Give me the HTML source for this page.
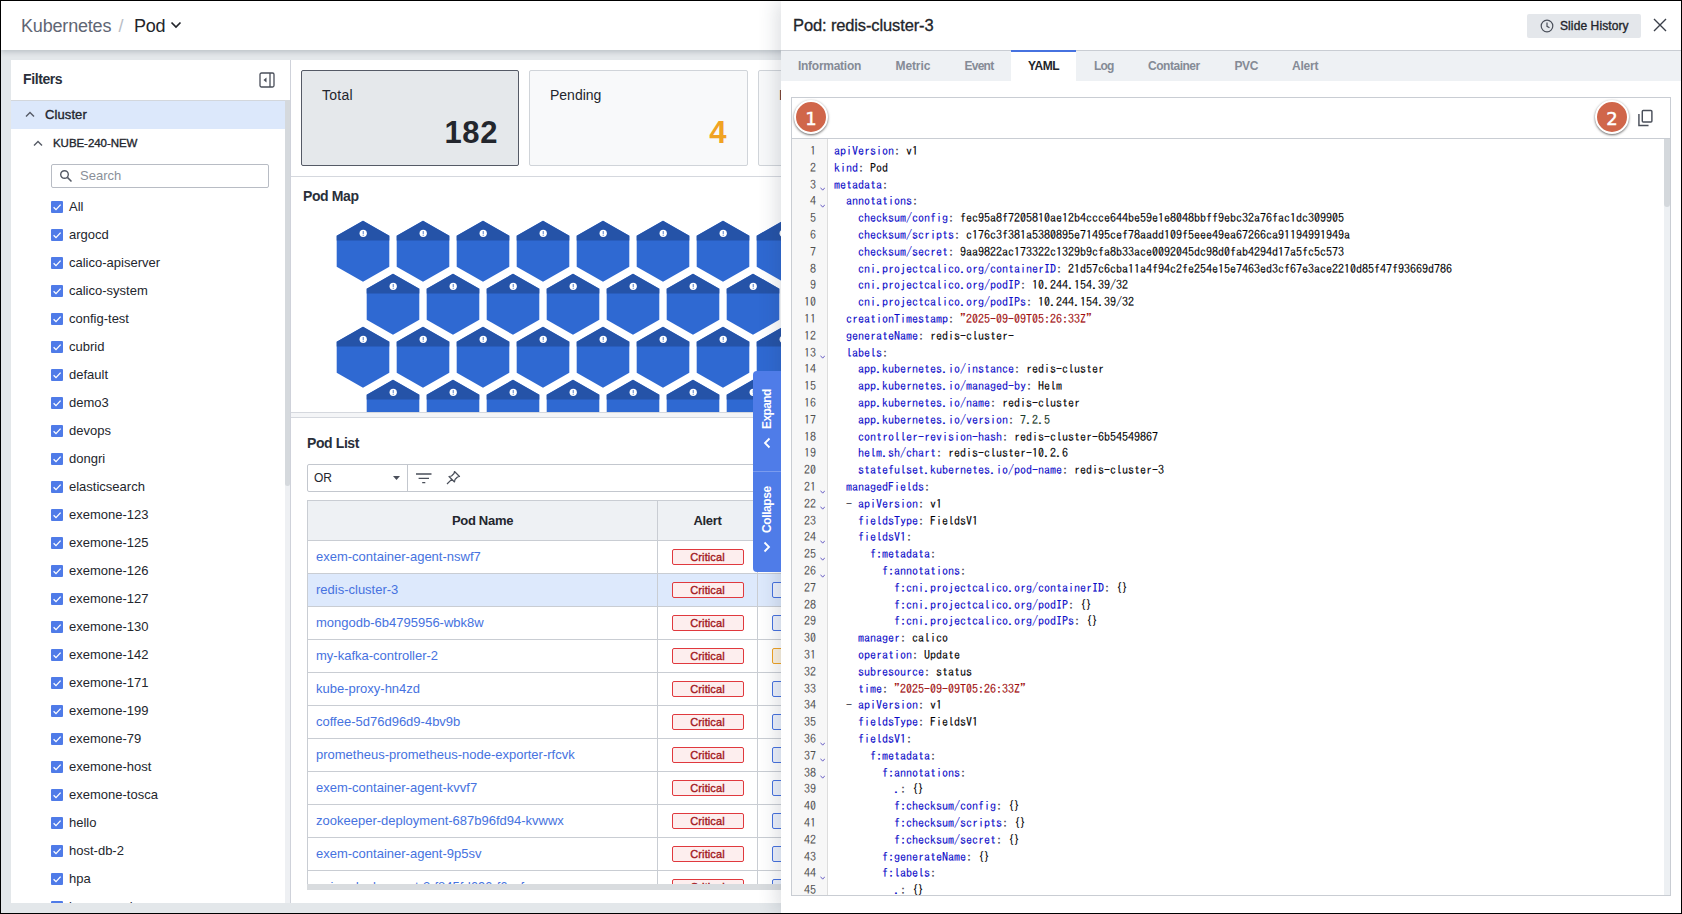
<!DOCTYPE html>
<html lang="en"><head><meta charset="utf-8"><title>Kubernetes / Pod</title>
<style>
*{box-sizing:border-box;margin:0;padding:0}
html,body{width:1682px;height:914px;overflow:hidden}
body{position:relative;background:#e3e7ea;font-family:"Liberation Sans", "DejaVu Sans", sans-serif;font-size:13px;color:#23262d;-webkit-font-smoothing:antialiased}
.abs{position:absolute}
#frame{position:absolute;left:0;top:0;width:1682px;height:914px;border:1px solid #000;z-index:100;pointer-events:none}
#top{position:absolute;left:1px;top:1px;width:1680px;height:49px;background:#fff;box-shadow:0 2px 5px rgba(60,70,85,.24)}
#top .k{position:absolute;left:20px;top:14px;font-size:18px;line-height:22px;color:#5f6674;white-space:nowrap;letter-spacing:-.18px}
#top .sl{position:absolute;left:117.5px;top:14px;font-size:18px;line-height:22px;color:#b9bdc6}
#top .p{position:absolute;left:133px;top:14px;font-size:18px;line-height:22px;color:#22252b;letter-spacing:-.25px}
#side{position:absolute;left:11px;top:60px;width:279px;height:843px;background:#fff;overflow:hidden}
#side .ttl{position:absolute;left:12px;top:10px;font-size:14px;font-weight:700;line-height:18px;color:#2a2f3a;letter-spacing:-.4px}
#side .cl{position:absolute;left:0;top:40px;width:274px;height:29px;background:#dce8fb;border-top:1px solid #d3d7dc}
#side .cl span{position:absolute;left:34px;top:6px;font-size:13px;line-height:16px;font-weight:400;-webkit-text-stroke:.35px #23262d;color:#23262d;letter-spacing:.1px}
#side .kube{position:absolute;left:42px;top:76px;font-size:11.5px;line-height:14px;color:#23262d;font-weight:400;-webkit-text-stroke:.35px #23262d;letter-spacing:-.05px}
#side .search{position:absolute;left:40px;top:104px;width:218px;height:24px;border:1px solid #b8bcc4;border-radius:2px;background:#fff}
#side .search span{position:absolute;left:28px;top:3px;font-size:13px;line-height:16px;color:#8a8f99}
.ck{position:absolute;left:40px;width:12px;height:12px;background:#4f7be8;border-radius:1px}
.ck svg{position:absolute;left:0;top:0}
.lb{position:absolute;left:58px;font-size:13px;line-height:16px;color:#23262d;white-space:nowrap}
#side .trk{position:absolute;left:274px;top:40px;width:5px;height:803px;background:#eef0f3}
#side .thb{position:absolute;left:274px;top:40px;width:5px;height:386px;background:#d5d9dd;border-radius:0 0 3px 3px}
#main{position:absolute;left:291px;top:60px;width:1000px;height:843px;background:#fff;overflow:hidden}
.card{position:absolute;top:10px;width:218px;height:96px;border-radius:2px}
.card .t{position:absolute;left:20px;top:15px;font-size:14px;line-height:18px;color:#23262d;letter-spacing:.25px}
.card .v{position:absolute;right:20px;top:41.5px;font-size:31px;line-height:40px;font-weight:700;letter-spacing:.6px}
.hline{position:absolute;left:0;width:1000px;height:1px;background:#d5d8de}
.sec{position:absolute;font-size:14px;font-weight:700;line-height:18px;color:#2a2f3a;letter-spacing:-.4px}
#tb{position:absolute;left:16px;top:404px;width:800px;height:28px;border:1px solid #c3c7ce;border-radius:2px}
#tb .or{position:absolute;left:0;top:0;width:100px;height:26px;border-right:1px solid #c3c7ce}
#tb .or span{position:absolute;left:6px;top:5px;font-size:12px;line-height:16px;color:#23262d}
table{position:absolute;left:16px;top:440px;border-collapse:collapse;table-layout:fixed;width:900px}
th{height:40px;background:#eef1f4;border:1px solid #c9cdd3;font-size:13px;font-weight:700;color:#23262d;text-align:center;letter-spacing:-.3px}
td{height:33px;border:1px solid #c9cdd3;font-size:13px;color:#4672e0;padding:0 0 2px 8px;white-space:nowrap;overflow:hidden}
tr.sel td{background:#dde9fc}
.crit{display:block;margin:0 auto;width:72px;height:16px;border:1px solid #e0393e;border-radius:2px;background:#fdeeee;color:#a3181d;font-size:11px;font-weight:400;-webkit-text-stroke:.35px #a3181d;line-height:14px;text-align:center;letter-spacing:.1px}
.bx{display:block;margin:0 0 0 14px;width:40px;height:16px;border:1px solid #4672e0;border-radius:2px;background:#edf2fd}
.bx.o{border-color:#f0a323;background:#fdf3e0}
#exp{position:absolute;left:753px;top:371px;width:28px;height:201px;background:#4f7ce8;border-radius:4px 0 0 4px;z-index:11}
#exp .d{position:absolute;left:0;top:100px;width:28px;height:1px;background:#7a9bee}
#exp .tx{position:absolute;left:14px;color:#fff;font-size:12px;font-weight:700;line-height:14px;white-space:nowrap;transform-origin:0 0;transform:rotate(-90deg) translate(0,-7px)}
#panel{position:absolute;left:781px;top:1px;width:900px;height:912px;background:#fff;box-shadow:-4px 0 18px rgba(40,50,70,.16);z-index:10}
#panel .title{position:absolute;left:12px;top:14px;font-size:16.5px;line-height:20px;color:#22252b;-webkit-text-stroke:.3px #22252b;white-space:nowrap;letter-spacing:-.13px}
#panel .sh{position:absolute;left:746px;top:13px;width:114px;height:24px;background:#e4e7eb;border-radius:2px}
#panel .sh span{position:absolute;left:33px;top:5px;font-size:12px;line-height:14px;color:#22252b;font-weight:400;-webkit-text-stroke:.35px #22252b;white-space:nowrap;letter-spacing:.1px}
#tabs{position:absolute;left:0;top:49px;width:900px;height:31px;background:#eef1f4;border-top:1px solid #c9cdd3}
#tabs span{position:absolute;top:8px;font-size:12px;line-height:14px;font-weight:700;color:#858b96;white-space:nowrap}
#tabs .act{position:absolute;left:230px;top:-1px;width:65px;height:31px;background:#fff;border-top:2px solid #4672e0}
#ed{position:absolute;left:10px;top:96px;width:880px;height:799px;border:1px solid #c9cdd3;overflow:hidden;background:#fff}
#ed .bar{position:absolute;left:0;top:0;width:878px;height:41px;border-bottom:1px solid #c9cdd3;background:#fff}
#ed .gut{position:absolute;left:0;top:41px;width:36px;height:760px;background:#f7f7f7;border-right:1px solid #ddd}
#ed .ln{position:absolute;left:0;width:24px;text-align:right;font:12px/17px "IPAGothic", "WenQuanYi Zen Hei Mono", "Liberation Mono", monospace;color:#4f4f4f}
#ed .fd{position:absolute;left:27.6px;width:5.4px;height:4px}
#ed .cd{position:absolute;left:42px;font:12px/17px "IPAGothic", "WenQuanYi Zen Hei Mono", "Liberation Mono", monospace;color:#000;white-space:pre;-webkit-text-stroke:.12px}
#ed .k{color:#0a0ac8}
#ed .s{color:#a00d0d}
#ed .n{color:#1a3a2a}
#ed .m{color:#4a4a55}
#ed .strk{position:absolute;left:872px;top:41px;width:6px;height:760px;background:#edf0f3}
#ed .sthb{position:absolute;left:872px;top:41px;width:6px;height:68px;background:#d4d8dc;border-radius:0 0 3px 3px}
.badge{position:absolute;width:34px;height:34px;border-radius:50%;background:#d0664a;border:2px solid #fff;box-shadow:0 1px 2.5px rgba(0,0,0,.6);color:#fff;font-family:"DejaVu Sans","Liberation Sans",sans-serif;font-size:18px;line-height:33px;text-align:center;-webkit-text-stroke:.45px #fff}
</style></head><body>

<div id="top"><span class="k">Kubernetes</span><span class="sl">/</span><span class="p">Pod</span>
<svg class="abs" style="left:169px;top:20px" width="12" height="8" viewBox="0 0 12 8"><path d="M1.5 1.5 L6 6 L10.5 1.5" fill="none" stroke="#22252b" stroke-width="1.7"/></svg></div>
<div id="side"><div class="ttl">Filters</div>
<svg class="abs" style="left:248px;top:12px" width="16" height="16" viewBox="0 0 16 16"><rect x="1" y="1" width="14" height="14" rx="1.5" fill="none" stroke="#4a4f5a" stroke-width="1.3"/><path d="M11 1 V15" stroke="#4a4f5a" stroke-width="1.3"/><path d="M7.5 5.5 L4.5 8 L7.5 10.5 Z" fill="#4a4f5a"/></svg>
<div class="cl"><svg class="abs" style="left:14px;top:10px" width="10" height="7" viewBox="0 0 10 7"><path d="M1 5.5 L5 1.5 L9 5.5" fill="none" stroke="#555a65" stroke-width="1.4"/></svg><span>Cluster</span></div>
<svg class="abs" style="left:22px;top:80px" width="10" height="7" viewBox="0 0 10 7"><path d="M1 5.5 L5 1.5 L9 5.5" fill="none" stroke="#555a65" stroke-width="1.4"/></svg>
<div class="kube">KUBE-240-NEW</div>
<div class="search"><svg class="abs" style="left:7px;top:4px" width="14" height="14" viewBox="0 0 14 14"><circle cx="5.5" cy="5.5" r="3.8" fill="none" stroke="#555a65" stroke-width="1.4"/><path d="M8.4 8.4 L12.5 12.5" stroke="#555a65" stroke-width="1.5"/></svg><span>Search</span></div>
<div class="ck" style="top:141px"><svg width="12" height="12" viewBox="0 0 12 12"><path d="M2.6 6.2 L5 8.6 L9.6 3.6" fill="none" stroke="#fff" stroke-width="1.3"/></svg></div><div class="lb" style="top:139px">All</div>
<div class="ck" style="top:169px"><svg width="12" height="12" viewBox="0 0 12 12"><path d="M2.6 6.2 L5 8.6 L9.6 3.6" fill="none" stroke="#fff" stroke-width="1.3"/></svg></div><div class="lb" style="top:167px">argocd</div>
<div class="ck" style="top:197px"><svg width="12" height="12" viewBox="0 0 12 12"><path d="M2.6 6.2 L5 8.6 L9.6 3.6" fill="none" stroke="#fff" stroke-width="1.3"/></svg></div><div class="lb" style="top:195px">calico-apiserver</div>
<div class="ck" style="top:225px"><svg width="12" height="12" viewBox="0 0 12 12"><path d="M2.6 6.2 L5 8.6 L9.6 3.6" fill="none" stroke="#fff" stroke-width="1.3"/></svg></div><div class="lb" style="top:223px">calico-system</div>
<div class="ck" style="top:253px"><svg width="12" height="12" viewBox="0 0 12 12"><path d="M2.6 6.2 L5 8.6 L9.6 3.6" fill="none" stroke="#fff" stroke-width="1.3"/></svg></div><div class="lb" style="top:251px">config-test</div>
<div class="ck" style="top:281px"><svg width="12" height="12" viewBox="0 0 12 12"><path d="M2.6 6.2 L5 8.6 L9.6 3.6" fill="none" stroke="#fff" stroke-width="1.3"/></svg></div><div class="lb" style="top:279px">cubrid</div>
<div class="ck" style="top:309px"><svg width="12" height="12" viewBox="0 0 12 12"><path d="M2.6 6.2 L5 8.6 L9.6 3.6" fill="none" stroke="#fff" stroke-width="1.3"/></svg></div><div class="lb" style="top:307px">default</div>
<div class="ck" style="top:337px"><svg width="12" height="12" viewBox="0 0 12 12"><path d="M2.6 6.2 L5 8.6 L9.6 3.6" fill="none" stroke="#fff" stroke-width="1.3"/></svg></div><div class="lb" style="top:335px">demo3</div>
<div class="ck" style="top:365px"><svg width="12" height="12" viewBox="0 0 12 12"><path d="M2.6 6.2 L5 8.6 L9.6 3.6" fill="none" stroke="#fff" stroke-width="1.3"/></svg></div><div class="lb" style="top:363px">devops</div>
<div class="ck" style="top:393px"><svg width="12" height="12" viewBox="0 0 12 12"><path d="M2.6 6.2 L5 8.6 L9.6 3.6" fill="none" stroke="#fff" stroke-width="1.3"/></svg></div><div class="lb" style="top:391px">dongri</div>
<div class="ck" style="top:421px"><svg width="12" height="12" viewBox="0 0 12 12"><path d="M2.6 6.2 L5 8.6 L9.6 3.6" fill="none" stroke="#fff" stroke-width="1.3"/></svg></div><div class="lb" style="top:419px">elasticsearch</div>
<div class="ck" style="top:449px"><svg width="12" height="12" viewBox="0 0 12 12"><path d="M2.6 6.2 L5 8.6 L9.6 3.6" fill="none" stroke="#fff" stroke-width="1.3"/></svg></div><div class="lb" style="top:447px">exemone-123</div>
<div class="ck" style="top:477px"><svg width="12" height="12" viewBox="0 0 12 12"><path d="M2.6 6.2 L5 8.6 L9.6 3.6" fill="none" stroke="#fff" stroke-width="1.3"/></svg></div><div class="lb" style="top:475px">exemone-125</div>
<div class="ck" style="top:505px"><svg width="12" height="12" viewBox="0 0 12 12"><path d="M2.6 6.2 L5 8.6 L9.6 3.6" fill="none" stroke="#fff" stroke-width="1.3"/></svg></div><div class="lb" style="top:503px">exemone-126</div>
<div class="ck" style="top:533px"><svg width="12" height="12" viewBox="0 0 12 12"><path d="M2.6 6.2 L5 8.6 L9.6 3.6" fill="none" stroke="#fff" stroke-width="1.3"/></svg></div><div class="lb" style="top:531px">exemone-127</div>
<div class="ck" style="top:561px"><svg width="12" height="12" viewBox="0 0 12 12"><path d="M2.6 6.2 L5 8.6 L9.6 3.6" fill="none" stroke="#fff" stroke-width="1.3"/></svg></div><div class="lb" style="top:559px">exemone-130</div>
<div class="ck" style="top:589px"><svg width="12" height="12" viewBox="0 0 12 12"><path d="M2.6 6.2 L5 8.6 L9.6 3.6" fill="none" stroke="#fff" stroke-width="1.3"/></svg></div><div class="lb" style="top:587px">exemone-142</div>
<div class="ck" style="top:617px"><svg width="12" height="12" viewBox="0 0 12 12"><path d="M2.6 6.2 L5 8.6 L9.6 3.6" fill="none" stroke="#fff" stroke-width="1.3"/></svg></div><div class="lb" style="top:615px">exemone-171</div>
<div class="ck" style="top:645px"><svg width="12" height="12" viewBox="0 0 12 12"><path d="M2.6 6.2 L5 8.6 L9.6 3.6" fill="none" stroke="#fff" stroke-width="1.3"/></svg></div><div class="lb" style="top:643px">exemone-199</div>
<div class="ck" style="top:673px"><svg width="12" height="12" viewBox="0 0 12 12"><path d="M2.6 6.2 L5 8.6 L9.6 3.6" fill="none" stroke="#fff" stroke-width="1.3"/></svg></div><div class="lb" style="top:671px">exemone-79</div>
<div class="ck" style="top:701px"><svg width="12" height="12" viewBox="0 0 12 12"><path d="M2.6 6.2 L5 8.6 L9.6 3.6" fill="none" stroke="#fff" stroke-width="1.3"/></svg></div><div class="lb" style="top:699px">exemone-host</div>
<div class="ck" style="top:729px"><svg width="12" height="12" viewBox="0 0 12 12"><path d="M2.6 6.2 L5 8.6 L9.6 3.6" fill="none" stroke="#fff" stroke-width="1.3"/></svg></div><div class="lb" style="top:727px">exemone-tosca</div>
<div class="ck" style="top:757px"><svg width="12" height="12" viewBox="0 0 12 12"><path d="M2.6 6.2 L5 8.6 L9.6 3.6" fill="none" stroke="#fff" stroke-width="1.3"/></svg></div><div class="lb" style="top:755px">hello</div>
<div class="ck" style="top:785px"><svg width="12" height="12" viewBox="0 0 12 12"><path d="M2.6 6.2 L5 8.6 L9.6 3.6" fill="none" stroke="#fff" stroke-width="1.3"/></svg></div><div class="lb" style="top:783px">host-db-2</div>
<div class="ck" style="top:813px"><svg width="12" height="12" viewBox="0 0 12 12"><path d="M2.6 6.2 L5 8.6 L9.6 3.6" fill="none" stroke="#fff" stroke-width="1.3"/></svg></div><div class="lb" style="top:811px">hpa</div>
<div class="ck" style="top:841px"><svg width="12" height="12" viewBox="0 0 12 12"><path d="M2.6 6.2 L5 8.6 L9.6 3.6" fill="none" stroke="#fff" stroke-width="1.3"/></svg></div><div class="lb" style="top:839px">ingress-nginx</div>
<div class="trk"></div><div class="thb"></div></div>
<div class="abs" style="left:290px;top:60px;width:1px;height:843px;background:#cfd2da"></div>
<div id="main">
<div class="card" style="left:10px;background:#e5e8eb;border:1px solid #555a66"><div class="t">Total</div><div class="v" style="color:#23262d">182</div></div>
<div class="card" style="left:238px;width:219px;background:#f8f9fa;border:1px solid #d0d4d9"><div class="t" style="letter-spacing:0">Pending</div><div class="v" style="color:#f0a323">4</div></div>
<div class="card" style="left:467px;background:#f8f9fa;border:1px solid #d0d4d9"><div class="t">Running</div></div>
<div class="hline" style="top:116px"></div>
<div class="sec" style="left:12px;top:127px">Pod Map</div>
<svg class="abs" style="left:0;top:150px" width="1000" height="202" viewBox="291 210 1000 202">
<defs><g id="hx"><path d="M0 -30.3 L26.3 -15.3 V15.7 L0 30.8 L-26.3 15.7 V-15.3 Z" fill="#2f69d2"/><path d="M0 -30.3 L26.3 -15.3 V-10.5 H-26.3 V-15.3 Z" fill="#2553a8"/><circle cx="0.2" cy="-17.7" r="3.65" fill="#fff"/><rect x="-.25" y="-20" width=".9" height="3.2" fill="#3f6fc4"/><rect x="-.25" y="-16.1" width=".9" height=".9" fill="#3f6fc4"/></g></defs>
<use href="#hx" x="363" y="251"/>
<use href="#hx" x="423" y="251"/>
<use href="#hx" x="483" y="251"/>
<use href="#hx" x="543" y="251"/>
<use href="#hx" x="603" y="251"/>
<use href="#hx" x="663" y="251"/>
<use href="#hx" x="723" y="251"/>
<use href="#hx" x="783" y="251"/>
<use href="#hx" x="843" y="251"/>
<use href="#hx" x="393" y="304"/>
<use href="#hx" x="453" y="304"/>
<use href="#hx" x="513" y="304"/>
<use href="#hx" x="573" y="304"/>
<use href="#hx" x="633" y="304"/>
<use href="#hx" x="693" y="304"/>
<use href="#hx" x="753" y="304"/>
<use href="#hx" x="813" y="304"/>
<use href="#hx" x="873" y="304"/>
<use href="#hx" x="363" y="357"/>
<use href="#hx" x="423" y="357"/>
<use href="#hx" x="483" y="357"/>
<use href="#hx" x="543" y="357"/>
<use href="#hx" x="603" y="357"/>
<use href="#hx" x="663" y="357"/>
<use href="#hx" x="723" y="357"/>
<use href="#hx" x="783" y="357"/>
<use href="#hx" x="843" y="357"/>
<use href="#hx" x="393" y="410"/>
<use href="#hx" x="453" y="410"/>
<use href="#hx" x="513" y="410"/>
<use href="#hx" x="573" y="410"/>
<use href="#hx" x="633" y="410"/>
<use href="#hx" x="693" y="410"/>
<use href="#hx" x="753" y="410"/>
<use href="#hx" x="813" y="410"/>
<use href="#hx" x="873" y="410"/>
</svg>
<div class="hline" style="top:352px"></div><div class="abs" style="left:0;top:353px;width:1000px;height:4px;background:#f4f5f7"></div><div class="hline" style="top:357px"></div>
<div class="sec" style="left:16px;top:374px">Pod List</div>
<div id="tb"><div class="or"><span>OR</span><svg class="abs" style="left:85px;top:11px" width="7" height="4" viewBox="0 0 7 4"><path d="M0 0 H7 L3.5 4 Z" fill="#4a4f5a"/></svg></div>
<svg class="abs" style="left:107.5px;top:6.5px" width="16" height="14" viewBox="0 0 16 14"><path d="M0 2 H15.5 M2.6 6.3 H13 M6.2 10.6 H9.3" stroke="#4a4f5a" stroke-width="1.3"/></svg>
<svg class="abs" style="left:138px;top:5px" width="15" height="16" viewBox="0 0 15 16"><path d="M8.5 1.5 L13.5 6.5 L11.5 7 L9 9.5 L8.5 12 L3 6.5 L5.5 6 L8 3.5 Z M5.7 9.3 L1 14" fill="none" stroke="#4a4f5a" stroke-width="1.2" stroke-linejoin="round"/></svg></div>
<table><colgroup><col style="width:350px"><col style="width:100px"><col style="width:450px"></colgroup>
<tr><th>Pod Name</th><th>Alert</th><th></th></tr>
<tr><td>exem-container-agent-nswf7</td><td style="padding:0"><span class="crit">Critical</span></td><td style="padding:0"><span class="bx"></span></td></tr>
<tr class="sel"><td>redis-cluster-3</td><td style="padding:0"><span class="crit">Critical</span></td><td style="padding:0"><span class="bx"></span></td></tr>
<tr><td>mongodb-6b4795956-wbk8w</td><td style="padding:0"><span class="crit">Critical</span></td><td style="padding:0"><span class="bx"></span></td></tr>
<tr><td>my-kafka-controller-2</td><td style="padding:0"><span class="crit">Critical</span></td><td style="padding:0"><span class="bx o"></span></td></tr>
<tr><td>kube-proxy-hn4zd</td><td style="padding:0"><span class="crit">Critical</span></td><td style="padding:0"><span class="bx"></span></td></tr>
<tr><td>coffee-5d76d96d9-4bv9b</td><td style="padding:0"><span class="crit">Critical</span></td><td style="padding:0"><span class="bx"></span></td></tr>
<tr><td>prometheus-prometheus-node-exporter-rfcvk</td><td style="padding:0"><span class="crit">Critical</span></td><td style="padding:0"><span class="bx"></span></td></tr>
<tr><td>exem-container-agent-kvvf7</td><td style="padding:0"><span class="crit">Critical</span></td><td style="padding:0"><span class="bx"></span></td></tr>
<tr><td>zookeeper-deployment-687b96fd94-kvwwx</td><td style="padding:0"><span class="crit">Critical</span></td><td style="padding:0"><span class="bx"></span></td></tr>
<tr><td>exem-container-agent-9p5sv</td><td style="padding:0"><span class="crit">Critical</span></td><td style="padding:0"><span class="bx"></span></td></tr>
<tr><td>nginx-deployment-2-f845fd696-f6zsf</td><td style="padding:0"><span class="crit">Critical</span></td><td style="padding:0"><span class="bx"></span></td></tr>
</table>
<div class="abs" style="left:16px;top:824px;width:984px;height:6px;background:#d9dcdf"></div><div class="abs" style="left:0;top:830px;width:1000px;height:13px;background:#fff"></div>
</div>
<div id="exp"><div class="d"></div><div class="tx" style="top:58px;letter-spacing:-.6px">Expand</div><svg class="abs" style="left:10px;top:66px" width="8" height="12" viewBox="0 0 8 12"><path d="M6.5 1.5 L2 6 L6.5 10.5" fill="none" stroke="#fff" stroke-width="1.8"/></svg>
<div class="tx" style="top:162px;letter-spacing:-.4px">Collapse</div><svg class="abs" style="left:10px;top:170px" width="8" height="12" viewBox="0 0 8 12"><path d="M1.5 1.5 L6 6 L1.5 10.5" fill="none" stroke="#fff" stroke-width="1.8"/></svg></div>
<div id="panel"><div class="title">Pod: redis-cluster-3</div>
<div class="sh"><svg class="abs" style="left:13px;top:5px" width="14" height="14" viewBox="0 0 14 14"><circle cx="7" cy="7" r="5.8" fill="none" stroke="#4a4f5a" stroke-width="1.2"/><path d="M7 3.5 V7.3 L9.5 8.8" fill="none" stroke="#4a4f5a" stroke-width="1.2"/></svg><span>Slide History</span></div>
<svg class="abs" style="left:872px;top:17px" width="14" height="14" viewBox="0 0 14 14"><path d="M1 1 L13 13 M13 1 L1 13" stroke="#3a3f4a" stroke-width="1.4"/></svg>
<div id="tabs"><div class="act"></div>
<span style="left:17px;letter-spacing:-0.27px">Information</span>
<span style="left:114.5px;letter-spacing:-0.1px">Metric</span>
<span style="left:183.5px;letter-spacing:-0.75px">Event</span>
<span style="left:247px;letter-spacing:-0.45px;color:#22252b">YAML</span>
<span style="left:313px;letter-spacing:-0.8px">Log</span>
<span style="left:367px;letter-spacing:-0.47px">Container</span>
<span style="left:453.5px;letter-spacing:-0.4px">PVC</span>
<span style="left:511px;letter-spacing:-0.2px">Alert</span>
</div>
<div id="ed"><div class="bar"></div><div class="gut"></div>
<div class="ln" style="top:44.0px">1</div>
<div class="cd" style="top:44.0px"><span class="k">apiVersion</span><span class="m">:</span> v1</div>
<div class="ln" style="top:60.8px">2</div>
<div class="cd" style="top:60.8px"><span class="k">kind</span><span class="m">:</span> Pod</div>
<div class="ln" style="top:77.6px">3</div>
<svg class="fd" style="top:89.2px" viewBox="0 0 6 4"><path d="M.5 .5 L3 3.3 L5.5 .5" fill="none" stroke="#5a4fc0" stroke-width="1"/></svg>
<div class="cd" style="top:77.6px"><span class="k">metadata</span><span class="m">:</span></div>
<div class="ln" style="top:94.4px">4</div>
<svg class="fd" style="top:106.0px" viewBox="0 0 6 4"><path d="M.5 .5 L3 3.3 L5.5 .5" fill="none" stroke="#5a4fc0" stroke-width="1"/></svg>
<div class="cd" style="top:94.4px">  <span class="k">annotations</span><span class="m">:</span></div>
<div class="ln" style="top:111.2px">5</div>
<div class="cd" style="top:111.2px">    <span class="k">checksum/config</span><span class="m">:</span> fec95a8f7205810ae12b4ccce644be59e1e8048bbff9ebc32a76fac1dc309905</div>
<div class="ln" style="top:128.0px">6</div>
<div class="cd" style="top:128.0px">    <span class="k">checksum/scripts</span><span class="m">:</span> c176c3f381a5380895e71495cef78aadd109f5eee49ea67266ca91194991949a</div>
<div class="ln" style="top:144.8px">7</div>
<div class="cd" style="top:144.8px">    <span class="k">checksum/secret</span><span class="m">:</span> 9aa9822ac173322c1329b9cfa8b33ace0092045dc98d0fab4294d17a5fc5c573</div>
<div class="ln" style="top:161.6px">8</div>
<div class="cd" style="top:161.6px">    <span class="k">cni.projectcalico.org/containerID</span><span class="m">:</span> 21d57c6cba11a4f94c2fe254e15e7463ed3cf67e3ace2210d85f47f93669d786</div>
<div class="ln" style="top:178.4px">9</div>
<div class="cd" style="top:178.4px">    <span class="k">cni.projectcalico.org/podIP</span><span class="m">:</span> 10.244.154.39/32</div>
<div class="ln" style="top:195.2px">10</div>
<div class="cd" style="top:195.2px">    <span class="k">cni.projectcalico.org/podIPs</span><span class="m">:</span> 10.244.154.39/32</div>
<div class="ln" style="top:212.0px">11</div>
<div class="cd" style="top:212.0px">  <span class="k">creationTimestamp</span><span class="m">:</span> <span class="s">"2025-09-09T05:26:33Z"</span></div>
<div class="ln" style="top:228.8px">12</div>
<div class="cd" style="top:228.8px">  <span class="k">generateName</span><span class="m">:</span> redis-cluster-</div>
<div class="ln" style="top:245.6px">13</div>
<svg class="fd" style="top:257.2px" viewBox="0 0 6 4"><path d="M.5 .5 L3 3.3 L5.5 .5" fill="none" stroke="#5a4fc0" stroke-width="1"/></svg>
<div class="cd" style="top:245.6px">  <span class="k">labels</span><span class="m">:</span></div>
<div class="ln" style="top:262.4px">14</div>
<div class="cd" style="top:262.4px">    <span class="k">app.kubernetes.io/instance</span><span class="m">:</span> redis-cluster</div>
<div class="ln" style="top:279.2px">15</div>
<div class="cd" style="top:279.2px">    <span class="k">app.kubernetes.io/managed-by</span><span class="m">:</span> Helm</div>
<div class="ln" style="top:296.0px">16</div>
<div class="cd" style="top:296.0px">    <span class="k">app.kubernetes.io/name</span><span class="m">:</span> redis-cluster</div>
<div class="ln" style="top:312.8px">17</div>
<div class="cd" style="top:312.8px">    <span class="k">app.kubernetes.io/version</span><span class="m">:</span> <span class="n">7.2.5</span></div>
<div class="ln" style="top:329.6px">18</div>
<div class="cd" style="top:329.6px">    <span class="k">controller-revision-hash</span><span class="m">:</span> redis-cluster-6b54549867</div>
<div class="ln" style="top:346.4px">19</div>
<div class="cd" style="top:346.4px">    <span class="k">helm.sh/chart</span><span class="m">:</span> redis-cluster-10.2.6</div>
<div class="ln" style="top:363.2px">20</div>
<div class="cd" style="top:363.2px">    <span class="k">statefulset.kubernetes.io/pod-name</span><span class="m">:</span> redis-cluster-3</div>
<div class="ln" style="top:380.0px">21</div>
<svg class="fd" style="top:391.6px" viewBox="0 0 6 4"><path d="M.5 .5 L3 3.3 L5.5 .5" fill="none" stroke="#5a4fc0" stroke-width="1"/></svg>
<div class="cd" style="top:380.0px">  <span class="k">managedFields</span><span class="m">:</span></div>
<div class="ln" style="top:396.8px">22</div>
<svg class="fd" style="top:408.4px" viewBox="0 0 6 4"><path d="M.5 .5 L3 3.3 L5.5 .5" fill="none" stroke="#5a4fc0" stroke-width="1"/></svg>
<div class="cd" style="top:396.8px">  <span class="m">- </span><span class="k">apiVersion</span><span class="m">:</span> v1</div>
<div class="ln" style="top:413.6px">23</div>
<div class="cd" style="top:413.6px">    <span class="k">fieldsType</span><span class="m">:</span> FieldsV1</div>
<div class="ln" style="top:430.4px">24</div>
<svg class="fd" style="top:442.0px" viewBox="0 0 6 4"><path d="M.5 .5 L3 3.3 L5.5 .5" fill="none" stroke="#5a4fc0" stroke-width="1"/></svg>
<div class="cd" style="top:430.4px">    <span class="k">fieldsV1</span><span class="m">:</span></div>
<div class="ln" style="top:447.2px">25</div>
<svg class="fd" style="top:458.8px" viewBox="0 0 6 4"><path d="M.5 .5 L3 3.3 L5.5 .5" fill="none" stroke="#5a4fc0" stroke-width="1"/></svg>
<div class="cd" style="top:447.2px">      <span class="k">f:metadata</span><span class="m">:</span></div>
<div class="ln" style="top:464.0px">26</div>
<svg class="fd" style="top:475.6px" viewBox="0 0 6 4"><path d="M.5 .5 L3 3.3 L5.5 .5" fill="none" stroke="#5a4fc0" stroke-width="1"/></svg>
<div class="cd" style="top:464.0px">        <span class="k">f:annotations</span><span class="m">:</span></div>
<div class="ln" style="top:480.8px">27</div>
<div class="cd" style="top:480.8px">          <span class="k">f:cni.projectcalico.org/containerID</span><span class="m">:</span> {}</div>
<div class="ln" style="top:497.6px">28</div>
<div class="cd" style="top:497.6px">          <span class="k">f:cni.projectcalico.org/podIP</span><span class="m">:</span> {}</div>
<div class="ln" style="top:514.4px">29</div>
<div class="cd" style="top:514.4px">          <span class="k">f:cni.projectcalico.org/podIPs</span><span class="m">:</span> {}</div>
<div class="ln" style="top:531.2px">30</div>
<div class="cd" style="top:531.2px">    <span class="k">manager</span><span class="m">:</span> calico</div>
<div class="ln" style="top:548.0px">31</div>
<div class="cd" style="top:548.0px">    <span class="k">operation</span><span class="m">:</span> Update</div>
<div class="ln" style="top:564.8px">32</div>
<div class="cd" style="top:564.8px">    <span class="k">subresource</span><span class="m">:</span> status</div>
<div class="ln" style="top:581.6px">33</div>
<div class="cd" style="top:581.6px">    <span class="k">time</span><span class="m">:</span> <span class="s">"2025-09-09T05:26:33Z"</span></div>
<div class="ln" style="top:598.4px">34</div>
<div class="cd" style="top:598.4px">  <span class="m">- </span><span class="k">apiVersion</span><span class="m">:</span> v1</div>
<div class="ln" style="top:615.2px">35</div>
<div class="cd" style="top:615.2px">    <span class="k">fieldsType</span><span class="m">:</span> FieldsV1</div>
<div class="ln" style="top:632.0px">36</div>
<svg class="fd" style="top:643.6px" viewBox="0 0 6 4"><path d="M.5 .5 L3 3.3 L5.5 .5" fill="none" stroke="#5a4fc0" stroke-width="1"/></svg>
<div class="cd" style="top:632.0px">    <span class="k">fieldsV1</span><span class="m">:</span></div>
<div class="ln" style="top:648.8px">37</div>
<svg class="fd" style="top:660.4px" viewBox="0 0 6 4"><path d="M.5 .5 L3 3.3 L5.5 .5" fill="none" stroke="#5a4fc0" stroke-width="1"/></svg>
<div class="cd" style="top:648.8px">      <span class="k">f:metadata</span><span class="m">:</span></div>
<div class="ln" style="top:665.6px">38</div>
<svg class="fd" style="top:677.2px" viewBox="0 0 6 4"><path d="M.5 .5 L3 3.3 L5.5 .5" fill="none" stroke="#5a4fc0" stroke-width="1"/></svg>
<div class="cd" style="top:665.6px">        <span class="k">f:annotations</span><span class="m">:</span></div>
<div class="ln" style="top:682.4px">39</div>
<div class="cd" style="top:682.4px">          <span class="k">.</span><span class="m">:</span> {}</div>
<div class="ln" style="top:699.2px">40</div>
<div class="cd" style="top:699.2px">          <span class="k">f:checksum/config</span><span class="m">:</span> {}</div>
<div class="ln" style="top:716.0px">41</div>
<div class="cd" style="top:716.0px">          <span class="k">f:checksum/scripts</span><span class="m">:</span> {}</div>
<div class="ln" style="top:732.8px">42</div>
<div class="cd" style="top:732.8px">          <span class="k">f:checksum/secret</span><span class="m">:</span> {}</div>
<div class="ln" style="top:749.6px">43</div>
<div class="cd" style="top:749.6px">        <span class="k">f:generateName</span><span class="m">:</span> {}</div>
<div class="ln" style="top:766.4px">44</div>
<svg class="fd" style="top:778.0px" viewBox="0 0 6 4"><path d="M.5 .5 L3 3.3 L5.5 .5" fill="none" stroke="#5a4fc0" stroke-width="1"/></svg>
<div class="cd" style="top:766.4px">        <span class="k">f:labels</span><span class="m">:</span></div>
<div class="ln" style="top:783.2px">45</div>
<div class="cd" style="top:783.2px">          <span class="k">.</span><span class="m">:</span> {}</div>
<div class="ln" style="top:800.0px">46</div>
<div class="cd" style="top:800.0px">          <span class="k">f:app.kubernetes.io/instance</span><span class="m">:</span> {}</div>
<div class="strk"></div><div class="sthb"></div>
<div class="badge" style="left:2px;top:2px">1</div><div class="badge" style="left:803px;top:2px">2</div>
<svg class="abs" style="left:845.3px;top:11px" width="17.3" height="19.4" viewBox="0 0 18 20"><rect x="5.5" y="1.5" width="10" height="12" rx="1" fill="none" stroke="#4a4f5a" stroke-width="1.5"/><path d="M2 5 V17 H12" fill="none" stroke="#4a4f5a" stroke-width="1.5"/></svg>
</div></div>
<div id="frame"></div>
</body></html>
